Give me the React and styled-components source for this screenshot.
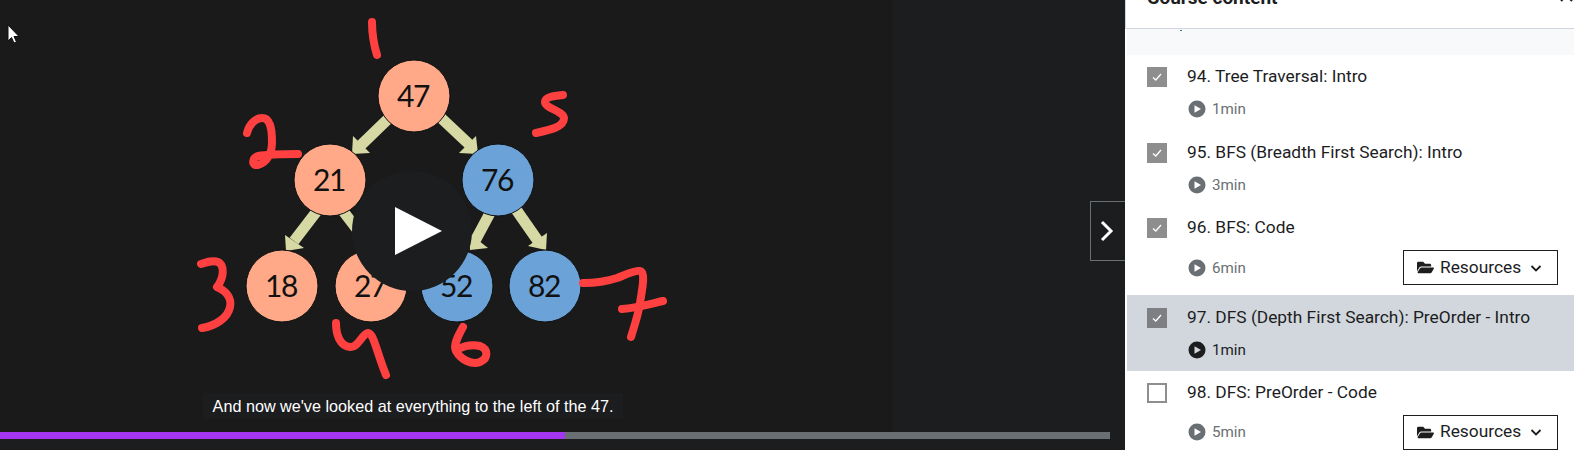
import React from 'react'
import styled, { createGlobalStyle } from 'styled-components'
import { FaFolderOpen } from 'react-icons/fa'

const GlobalStyle = createGlobalStyle`
  html, body {
    margin: 0;
    padding: 0;
    height: 450px;
    overflow: hidden;
    background: #1c1d1f;
  }
`

const Page = styled.div`
  display: flex;
  width: 1574px;
  height: 450px;
  overflow: hidden;
`

const Player = styled.div`
  position: relative;
  flex: 0 0 1125px;
  display: flex;
  flex-direction: column;
  background: #1c1d1f;
`

const Stage = styled.div`
  flex: 1;
  background: #1a1a1a;
  width: 893px;
`

const Graph = styled.svg`
  display: block;
`

const ProgressTrack = styled.div`
  width: 1110px;
  height: 7px;
  margin-bottom: 11px;
  background: #6a6f73;
`

const ProgressFill = styled.div`
  height: 100%;
  background: #a435f0;
`

const PlayButton = styled.div`
  position: absolute;
  left: 352px;
  top: 171px;
  width: 120px;
  height: 120px;
  border-radius: 50%;
  background: #1c1d1f;
  display: flex;
  align-items: center;
  justify-content: center;
`

const Caption = styled.div`
  position: absolute;
  left: 203px;
  top: 393px;
  width: 420px;
  height: 26px;
  background: #1c1d1f;
  color: #fff;
  font: 16.2px/26px "Liberation Sans", Arial, sans-serif;
  text-align: center;
  white-space: nowrap;
`

const NextButton = styled.div`
  position: absolute;
  left: 1090px;
  top: 201px;
  width: 35px;
  height: 60px;
  box-sizing: border-box;
  border: 1px solid #6a6f73;
  border-right: 0;
  background: #1c1d1f;
  display: flex;
  align-items: center;
  justify-content: center;
`

const Cursor = styled.svg`
  position: absolute;
  left: 7px;
  top: 24px;
`

const Sidebar = styled.aside`
  flex: 1;
  min-width: 0;
  display: flex;
  flex-direction: column;
  background: #fff;
  font-family: Roboto, "Liberation Sans", sans-serif;
  color: #1c1d1f;
`

const Header = styled.div`
  height: 29px;
  flex: none;
  display: flex;
  align-items: flex-end;
  justify-content: space-between;
  padding: 0 0 18px 21px;
  box-sizing: border-box;
  border-left: 1px solid #d1d5e0;
  border-bottom: 1px solid #d1d5e0;
  font-size: 19px;
  font-weight: 700;
  line-height: 24px;
  white-space: nowrap;
`

const CloseIcon = styled.svg`
  flex: none;
  margin-bottom: 7px;
`

const SectionBand = styled.div`
  position: relative;
  height: 26px;
  flex: none;
  margin-left: 2px;
  background: #f7f9fa;
`

const BandSpeck = styled.span`
  position: absolute;
  left: 53px;
  top: 1px;
  width: 2px;
  height: 1px;
  background: #3f6f8a;
`

const List = styled.div`
  margin-left: 2px;
`

const Row = styled.div`
  height: ${(p) => (p.$tall ? 89 : 75.6)}px;
  box-sizing: border-box;
  display: grid;
  grid-template-columns: 40px 1fr;
  padding: ${(p) => (p.$active ? 13 : 12)}px 16px 0 20px;
  background: ${(p) => (p.$active ? '#d1d7dc' : 'transparent')};
`

const Check = styled.div`
  width: 20px;
  height: 20px;
  box-sizing: border-box;
  display: flex;
  align-items: center;
  justify-content: center;
  background: ${(p) => (p.$checked ? (p.$active ? '#7d7f83' : '#8e8e8e') : '#fff')};
  border: ${(p) => (p.$checked ? 0 : '2px solid #8e8e8e')};
`

const RowBody = styled.div`
  min-width: 0;
`

const RowTitle = styled.div`
  font-size: 17.33px;
  line-height: 20px;
  margin-top: -1px;
  white-space: nowrap;
`

const RowMeta = styled.div`
  display: flex;
  align-items: center;
  justify-content: space-between;
  margin-top: 13px;
`

const Duration = styled.div`
  display: flex;
  align-items: center;
  gap: 6px;
  padding-left: 1px;
  font-size: 15.17px;
  line-height: 20px;
  color: ${(p) => (p.$active ? '#1c1d1f' : '#6a6f73')};
`

const ResourcesButton = styled.div`
  width: 155px;
  height: 35px;
  box-sizing: border-box;
  border: 1px solid #1c1d1f;
  background: #fff;
  display: flex;
  align-items: center;
  padding-left: 13px;
  font-size: 17.33px;
`

const ResourcesLabel = styled.span`
  margin-left: 6px;
  margin-right: 9px;
  position: relative;
  top: -1px;
`

const lectures = [
  { id: 94, title: '94. Tree Traversal: Intro', time: '1min', checked: true },
  { id: 95, title: '95. BFS (Breadth First Search): Intro', time: '3min', checked: true },
  { id: 96, title: '96. BFS: Code', time: '6min', checked: true, resources: true },
  { id: 97, title: '97. DFS (Depth First Search): PreOrder - Intro', time: '1min', checked: true, active: true },
  { id: 98, title: '98. DFS: PreOrder - Code', time: '5min', resources: true },
]

const nodes = [
  { x: 414, y: 96, label: '47', fill: '#ffa988' },
  { x: 330, y: 180, label: '21', fill: '#ffa988' },
  { x: 498, y: 180, label: '76', fill: '#6ba3d8' },
  { x: 282, y: 286, label: '18', fill: '#ffa988' },
  { x: 371, y: 286, label: '27', fill: '#ffa988' },
  { x: 457, y: 286, label: '52', fill: '#6ba3d8' },
  { x: 545, y: 286, label: '82', fill: '#6ba3d8' },
]

const arrows = [
  { shaft: '389,118 358,148', head: '352,154 353,136 370,153' },
  { shaft: '439,116 472,147', head: '478,154 476,136 459,153' },
  { shaft: '317,211 294,241', head: '286,251 285,235 304,248' },
  { shaft: '343,211 366,241', head: '374,251 375,235 356,248' },
  { shaft: '490,213 475,241', head: '470,250 469,233 488,248' },
  { shaft: '515,208 538,241', head: '546,250 547,233 528,246' },
]

// handwritten visit order on top of the tree
const strokes = [
  'M372 22 C372 32 373 42 377 55',
  'M247 133 C249 124 256 118 262 118 C270 118 272 128 272 142 C272 152 268 162 258 165 C251 166 252 158 258 156 C270 154 285 154 298 154',
  'M563 95 C553 96 545 97 545 102 C545 108 563 111 564 118 C564 127 550 130 536 133',
  'M201 264 C207 262 213 260 218 262 C225 265 224 278 217 287 C226 291 232 298 230 307 C228 318 215 326 202 328',
  'M336 323 C336 335 340 346 350 347 C358 348 362 334 368 333 C374 334 376 350 386 375',
  'M463 327 C458 336 453 345 456 351 C461 360 472 365 480 362 C489 358 488 349 480 346 C472 344 466 345 458 349',
  'M583 283 C595 283 605 282 617 278 C625 275 635 270 640 271 C646 272 642 290 640 303 C638 316 634 327 631 337',
  'M622 309 C637 308 650 304 663 301',
]

function TreeGraph() {
  return (
    <Graph width="700" height="400" viewBox="0 0 700 400">
      {arrows.map(({ shaft, head }) => {
        const [from, to] = shaft.split(' ').map((pt) => pt.split(','))
        return (
          <g key={shaft} fill="#d6d9a4">
            <line x1={from[0]} y1={from[1]} x2={to[0]} y2={to[1]} stroke="#d6d9a4" strokeWidth="11" />
            <polygon points={head} />
          </g>
        )
      })}
      {nodes.map(({ x, y, label, fill }) => (
        <g key={label}>
          <circle cx={x} cy={y} r="36" fill={fill} stroke="#111" strokeWidth="1" />
          <text
            x={x - 1}
            y={y + 11}
            textAnchor="middle"
            fontFamily="Lato, sans-serif"
            fontSize="30"
            letterSpacing="-1.5"
            fill="#111"
          >
            {label}
          </text>
        </g>
      ))}
      {strokes.map((d) => (
        <path key={d} d={d} fill="none" stroke="#ff4040" strokeWidth="8" strokeLinecap="round" strokeLinejoin="round" />
      ))}
    </Graph>
  )
}

function PlayDot({ active }) {
  return (
    <svg width="18" height="18" viewBox="0 0 18 18">
      <circle cx="9" cy="9" r="8.5" fill={active ? '#1c1d1f' : '#6a6f73'} />
      <path d="M6.5 5.2 13 9l-6.5 3.8z" fill={active ? '#d1d7dc' : '#fff'} />
    </svg>
  )
}

function Lecture({ title, time, checked, active, resources }) {
  return (
    <Row $active={active} $tall={resources}>
      <Check $checked={checked} $active={active}>
        {checked && (
          <svg width="12" height="12" viewBox="0 0 12 12">
            <path d="M2 6.5 4.800 9 10 3" fill="none" stroke="#fff" strokeWidth="1.3" />
          </svg>
        )}
      </Check>
      <RowBody>
        <RowTitle>{title}</RowTitle>
        <RowMeta>
          <Duration $active={active}>
            <PlayDot active={active} />
            {time}
          </Duration>
          {resources && (
            <ResourcesButton>
              <FaFolderOpen size={17} color="#1c1d1f" />
              <ResourcesLabel>Resources</ResourcesLabel>
              <svg width="12" height="12" viewBox="0 0 12 12">
                <path d="M1.500 4 6 8.500 10.500 4" fill="none" stroke="#1c1d1f" strokeWidth="1.8" />
              </svg>
            </ResourcesButton>
          )}
        </RowMeta>
      </RowBody>
    </Row>
  )
}

export default function App() {
  return (
    <Page>
      <GlobalStyle />
      <Player>
        <Stage>
          <TreeGraph />
        </Stage>
        <ProgressTrack>
          <ProgressFill style={{ width: `${(565 / 1110) * 100}%` }} />
        </ProgressTrack>
        <PlayButton>
          <svg width="120" height="120" viewBox="0 0 120 120">
            <polygon points="43,36 90,60 43,84" fill="#fff" />
          </svg>
        </PlayButton>
        <Caption>And now we've looked at everything to the left of the 47.</Caption>
        <NextButton>
          <svg width="18" height="22" viewBox="0 0 18 22">
            <path d="M3 2l9 9-9 9" fill="none" stroke="#fff" strokeWidth="3" />
          </svg>
        </NextButton>
        <Cursor width="14" height="20" viewBox="0 0 14 20">
          <path d="M1 1v16l3.500-3.500 2.500 5.500 2.500-1-2.500-5.500H12z" fill="#fff" stroke="#111" strokeWidth="1" />
        </Cursor>
      </Player>
      <Sidebar>
        <Header>
          <span>Course content</span>
          <CloseIcon width="16" height="16" viewBox="0 0 16 16">
            <path d="M3 3 14 14M14 3 3 14" fill="none" stroke="#1c1d1f" strokeWidth="2" />
          </CloseIcon>
        </Header>
        <SectionBand>
          <BandSpeck />
        </SectionBand>
        <List>
          {lectures.map((lecture) => (
            <Lecture key={lecture.id} {...lecture} />
          ))}
        </List>
      </Sidebar>
    </Page>
  )
}
